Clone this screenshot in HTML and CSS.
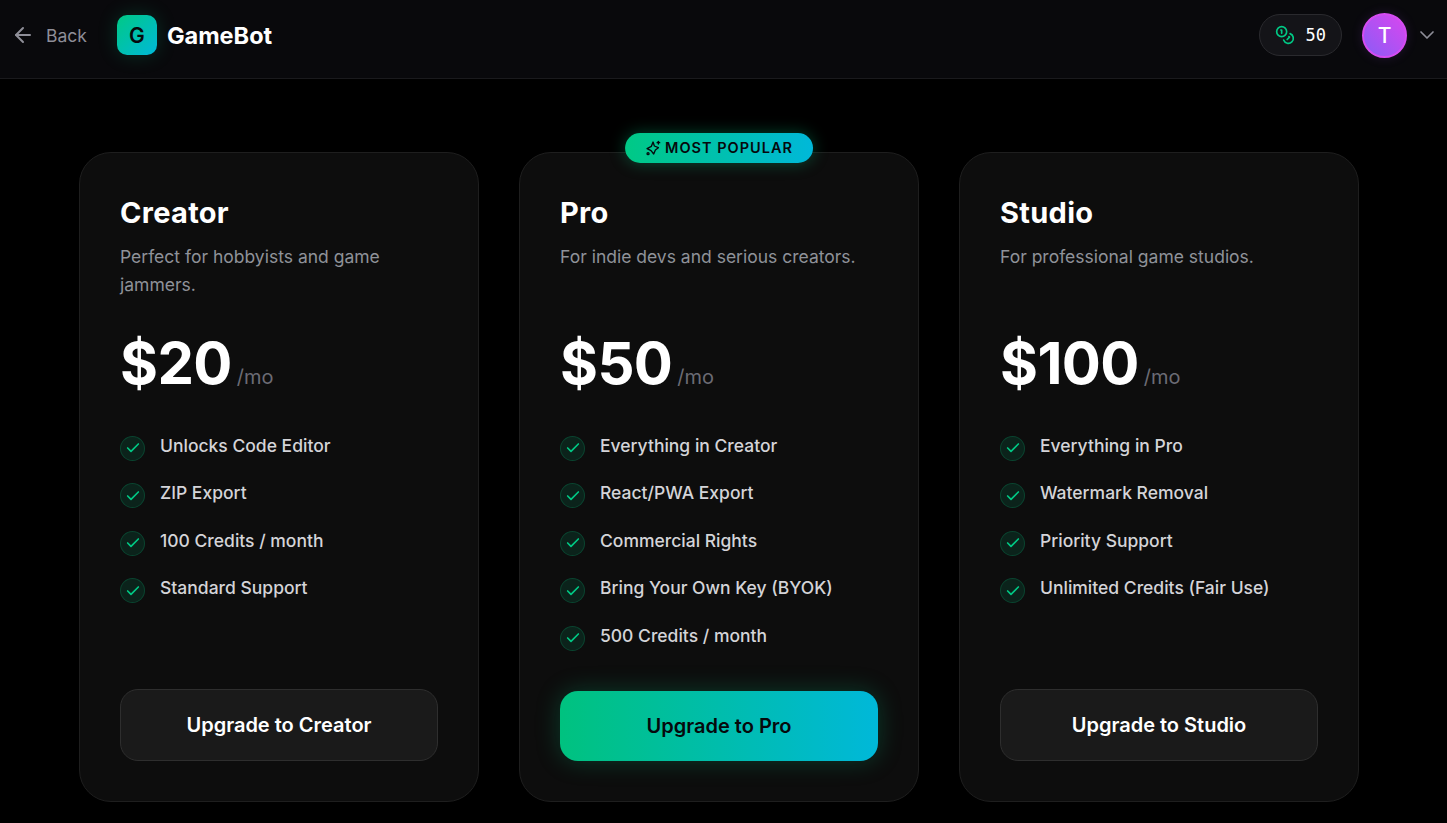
FILE: index.html
```html
<!DOCTYPE html>
<html lang="en">

<head>
    <meta charset="UTF-8">
    <meta name="viewport" content="width=device-width, initial-scale=1.0">
    <title>GameBot - Upgrade</title>
    <link rel="stylesheet" href="styles.css">
</head>

<body>
    <header class="topbar">
        <div class="topbar-left">
            <a class="back-link" href="#">
                <svg class="back-icon" viewBox="0 0 24 24"><path d="m12 19-7-7 7-7" /><path d="M19 12H5" /></svg>
                <span>Back</span>
            </a>
            <div class="brand">
                <div class="brand-logo">G</div>
                <span class="brand-name">GameBot</span>
            </div>
        </div>
        <div class="topbar-right">
            <div class="credits">
                <svg class="coins-icon" viewBox="0 0 24 24">
                    <circle cx="8" cy="8" r="6" />
                    <path d="M18.09 10.37A6 6 0 1 1 10.34 18" />
                    <path d="M7 6h1v4" />
                    <path d="m16.71 13.88.7.71-2.82 2.82" />
                </svg>
                <span>50</span>
            </div>
            <div class="avatar">T</div>
            <svg class="chevron" viewBox="0 0 24 24"><path d="m6 9 6 6 6-6" /></svg>
        </div>
    </header>

    <main class="plans">
        <section class="plan">
            <h2>Creator</h2>
            <p class="plan-desc">Perfect for hobbyists and game jammers.</p>
            <div class="plan-price"><strong>$20</strong><span>/mo</span></div>
            <ul class="features">
                <li><span class="check"><svg viewBox="0 0 24 24"><path d="M20 6 9 17l-5-5" /></svg></span>Unlocks Code Editor</li>
                <li><span class="check"><svg viewBox="0 0 24 24"><path d="M20 6 9 17l-5-5" /></svg></span>ZIP Export</li>
                <li><span class="check"><svg viewBox="0 0 24 24"><path d="M20 6 9 17l-5-5" /></svg></span>100 Credits / month</li>
                <li><span class="check"><svg viewBox="0 0 24 24"><path d="M20 6 9 17l-5-5" /></svg></span>Standard Support</li>
            </ul>
            <button class="plan-btn">Upgrade to Creator</button>
        </section>

        <section class="plan">
            <div class="popular-badge">
                <svg viewBox="0 0 24 24">
                    <path d="M12 3 14 9 20 11.500 15.500 15 13 21 9 16 3 13 9.500 9.500z" />
                    <path d="M20 2v4" /><path d="M18 4h4" />
                    <circle cx="4.500" cy="20.500" r="1.500" />
                </svg>
                MOST POPULAR
            </div>
            <h2>Pro</h2>
            <p class="plan-desc">For indie devs and serious creators.</p>
            <div class="plan-price"><strong>$50</strong><span>/mo</span></div>
            <ul class="features">
                <li><span class="check"><svg viewBox="0 0 24 24"><path d="M20 6 9 17l-5-5" /></svg></span>Everything in Creator</li>
                <li><span class="check"><svg viewBox="0 0 24 24"><path d="M20 6 9 17l-5-5" /></svg></span>React/PWA Export</li>
                <li><span class="check"><svg viewBox="0 0 24 24"><path d="M20 6 9 17l-5-5" /></svg></span>Commercial Rights</li>
                <li><span class="check"><svg viewBox="0 0 24 24"><path d="M20 6 9 17l-5-5" /></svg></span>Bring Your Own Key (BYOK)</li>
                <li><span class="check"><svg viewBox="0 0 24 24"><path d="M20 6 9 17l-5-5" /></svg></span>500 Credits / month</li>
            </ul>
            <button class="plan-btn plan-btn-primary">Upgrade to Pro</button>
        </section>

        <section class="plan">
            <h2>Studio</h2>
            <p class="plan-desc">For professional game studios.</p>
            <div class="plan-price"><strong>$100</strong><span>/mo</span></div>
            <ul class="features">
                <li><span class="check"><svg viewBox="0 0 24 24"><path d="M20 6 9 17l-5-5" /></svg></span>Everything in Pro</li>
                <li><span class="check"><svg viewBox="0 0 24 24"><path d="M20 6 9 17l-5-5" /></svg></span>Watermark Removal</li>
                <li><span class="check"><svg viewBox="0 0 24 24"><path d="M20 6 9 17l-5-5" /></svg></span>Priority Support</li>
                <li><span class="check"><svg viewBox="0 0 24 24"><path d="M20 6 9 17l-5-5" /></svg></span>Unlimited Credits (Fair Use)</li>
            </ul>
            <button class="plan-btn">Upgrade to Studio</button>
        </section>
    </main>
</body>

</html>
```

FILE: styles.css
```css
* {
    padding: 0;
    margin: 0;
    box-sizing: border-box;
}

body {
    height: 823px;
    overflow: hidden;
    background-color: #000;
    color: #fff;
    font-family: "Inter", "Liberation Sans", sans-serif;
}

svg {
    fill: none;
    stroke: currentColor;
    stroke-width: 2;
    stroke-linecap: round;
    stroke-linejoin: round;
}

.topbar {
    display: flex;
    align-items: center;
    justify-content: space-between;
    height: 79px;
    padding: 0 8px 8px 11px;
    background-color: #09090c;
    border-bottom: 1px solid #1a1a1d;
}

.topbar-left,
.topbar-right {
    display: flex;
    align-items: center;
}

.back-link {
    display: flex;
    align-items: center;
    gap: 11px;
    color: #8e8e98;
    font-size: 17.5px;
    text-decoration: none;
}

.back-icon {
    width: 24px;
    height: 24px;
}

.brand {
    display: flex;
    align-items: center;
    gap: 10px;
    margin-left: 30px;
}

.brand-logo {
    display: flex;
    align-items: center;
    justify-content: center;
    width: 40px;
    height: 40px;
    border-radius: 10px;
    background: linear-gradient(135deg, #00c985, #00b8d9);
    box-shadow: 0 0 20px rgba(0, 200, 130, 0.2);
    color: #06090c;
    font-size: 21px;
    font-weight: 600;
}

.brand-name {
    font-size: 23.5px;
    font-weight: 700;
}

.credits {
    display: flex;
    align-items: center;
    gap: 11px;
    height: 42px;
    padding: 0 15px;
    background-color: #141418;
    border: 1px solid #2a2a2e;
    border-radius: 21px;
    font-family: "DejaVu Sans Mono", monospace;
    font-size: 17px;
}

.coins-icon {
    width: 20px;
    height: 20px;
    color: #00c985;
}

.avatar {
    display: flex;
    align-items: center;
    justify-content: center;
    width: 45px;
    height: 45px;
    margin-left: 20px;
    border-radius: 50%;
    border: 2px solid #d54cf2;
    background: linear-gradient(45deg, #8b5cf6, #d946ef);
    box-shadow: 0 0 12px rgba(168, 85, 247, 0.15);
    font-size: 21px;
    font-weight: 500;
}

.chevron {
    width: 24px;
    height: 24px;
    margin-left: 8px;
    stroke-width: 1.700;
    color: #8e8e98;
}

.plans {
    display: flex;
    gap: 40px;
    width: 1280px;
    height: 650px;
    margin: 73px 0 0 79px;
}

.plan {
    position: relative;
    display: flex;
    flex-direction: column;
    width: 400px;
    padding: 40px;
    background-color: #0d0d0d;
    border: 1px solid #1e1e1e;
    border-radius: 32px;
}

.plan h2 {
    font-size: 29px;
    line-height: 40px;
    font-weight: 700;
    letter-spacing: 0.3px;
}

.plan-desc {
    height: 56px;
    margin-top: 10px;
    color: #8f9299;
    font-size: 17.5px;
    line-height: 28px;
}

.plan-price {
    display: flex;
    align-items: baseline;
    gap: 5px;
    margin-top: 28px;
}

.plan-price strong {
    font-size: 58px;
    line-height: 72px;
    font-weight: 700;
    letter-spacing: -0.6px;
}

.plan-price span {
    color: #6b6b74;
    font-size: 20px;
}

.features {
    display: flex;
    flex-direction: column;
    gap: 19.5px;
    margin-top: 32.5px;
    list-style: none;
}

.features li {
    display: flex;
    align-items: flex-start;
    gap: 15px;
    color: #d4d4d8;
    font-size: 17.5px;
    font-weight: 500;
    line-height: 28px;
}

.check {
    display: flex;
    align-items: center;
    justify-content: center;
    width: 25px;
    height: 25px;
    margin: 4px 0 -1px;
    flex-shrink: 0;
    background-color: rgba(0, 200, 130, 0.12);
    border: 1px solid rgba(0, 200, 130, 0.2);
    border-radius: 50%;
    color: #00c985;
}

.check svg {
    width: 16px;
    height: 16px;
    stroke-width: 2.500;
}

.plan-btn {
    width: 100%;
    height: 72px;
    margin-top: auto;
    background-color: #1a1a1a;
    border: 1px solid #2e2e2e;
    border-radius: 18px;
    color: #fff;
    font-family: inherit;
    font-size: 20px;
    font-weight: 600;
}

.plan-btn-primary {
    height: 70px;
    background: linear-gradient(90deg, #00c27f, #00b8d9);
    border: none;
    box-shadow: 0 0 24px rgba(0, 200, 130, 0.25);
    color: #06090c;
}

.popular-badge {
    position: absolute;
    top: -20px;
    left: 50%;
    transform: translateX(-50%);
    display: flex;
    align-items: center;
    gap: 4px;
    height: 30px;
    padding: 0 20px 1px;
    white-space: nowrap;
    background: linear-gradient(90deg, #00c985, #00b8d9);
    border-radius: 15px;
    box-shadow: 0 0 16px rgba(0, 200, 130, 0.35);
    color: #06090c;
    font-size: 14.5px;
    font-weight: 600;
    letter-spacing: 1px;
}

.popular-badge svg {
    width: 16px;
    height: 16px;
}
```
